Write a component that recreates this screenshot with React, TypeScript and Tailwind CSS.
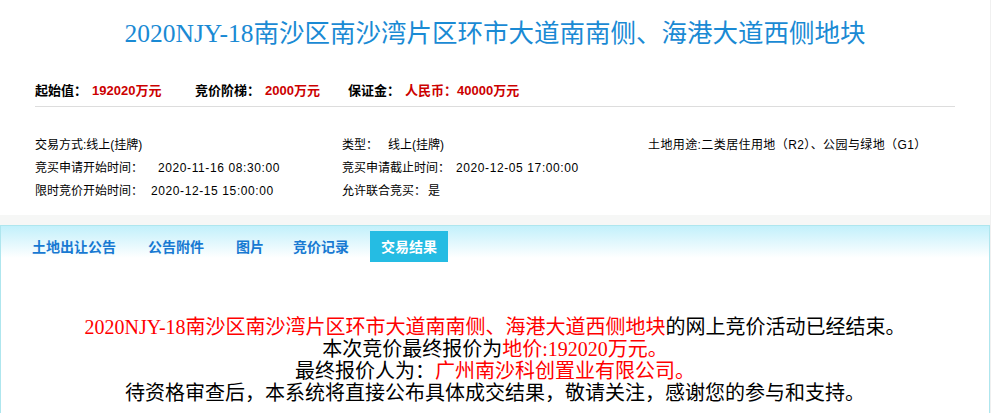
import React from 'react'

const cjk = "font-['Noto_Sans_CJK_SC',sans-serif]"
const sansMix = "font-['Liberation_Sans','Noto_Sans_CJK_SC',sans-serif]"
const serifMix = "font-['Liberation_Serif','Noto_Sans_CJK_SC',serif]"

const tabs = [
  { label: '土地出让公告', cls: 'ml-[20px] text-[#1779d2]' },
  { label: '公告附件', cls: 'ml-[10px] text-[#1779d2]' },
  { label: '图片', cls: 'ml-[10px] text-[#1779d2]' },
  { label: '竞价记录', cls: 'ml-[7px] text-[#1779d2]' },
  { label: '交易结果', cls: 'ml-[10px] bg-[#25bce3] text-white' },
]

const App = () => {
  return (
    <div className={`w-[991px] h-[413px] overflow-hidden bg-white ${cjk}`}>
      <div className="w-[991px] border-r border-[#f0f0f0]">
        {/* title */}
        <div className="h-[68px] flex items-center justify-center">
          <h1 className={`text-[25.5px] leading-[30px] font-normal text-[#1a8ad4] ${serifMix}`}>
            2020NJY-18南沙区南沙湾片区环市大道南南侧、海港大道西侧地块
          </h1>
        </div>

        {/* price row */}
        <div className={`mx-[35px] h-[39px] flex items-end pb-[7px] border-b border-[#dddddd] text-[13px] leading-[17px] font-bold ${sansMix}`}>
          <span className="w-[57px] text-black">起始值：</span>
          <span className="w-[103px] text-[#cc0000]">192020万元</span>
          <span className="w-[70px] text-black">竞价阶梯：</span>
          <span className="w-[83px] text-[#cc0000]">2000万元</span>
          <span className="w-[57px] text-black">保证金：</span>
          <span className="text-[#cc0000]">人民币：40000万元</span>
        </div>

        {/* info grid */}
        <div className={`pl-[35px] pt-[27px] pb-[12px] grid grid-cols-[307px_306px_1fr] text-[12px] leading-[23px] text-black ${sansMix}`}>
          <div>交易方式:线上(挂牌)</div>
          <div>类型：<span className="ml-[10px]">线上(挂牌)</span></div>
          <div className="tracking-[0.4px]">土地用途:二类居住用地（R2）、公园与绿地（G1）</div>
          <div>竞买申请开始时间：<span className="ml-[15px] tracking-[0.6px]">2020-11-16 08:30:00</span></div>
          <div>竞买申请截止时间：<span className="ml-[6px] tracking-[0.6px]">2020-12-05 17:00:00</span></div>
          <div></div>
          <div>限时竞价开始时间：<span className="ml-[8px] tracking-[0.6px]">2020-12-15 15:00:00</span></div>
          <div>允许联合竞买：<span className="ml-[2px]">是</span></div>
          <div></div>
        </div>

        <div className="h-[10px] bg-[#f6f7f6]"></div>

        {/* result panel */}
        <div className="h-[200px] border-t border-l border-r border-[#aee6ee] bg-[linear-gradient(to_bottom,#c2f0fb,#ffffff_32px)]">
          <div className="mt-[5px] h-[31px] flex">
            {tabs.map((t) => (
              <div key={t.label} className={`px-[11px] flex items-center text-[14px] font-bold ${t.cls}`}>
                {t.label}
              </div>
            ))}
          </div>

          <div className={`mt-[54px] text-center text-[20px] leading-[22px] text-black ${serifMix}`}>
            <p>
              <span className="text-[#ff0000]">2020NJY-18南沙区南沙湾片区环市大道南南侧、海港大道西侧地块</span>的网上竞价活动已经结束。
            </p>
            <p>
              本次竞价最终报价为<span className="text-[#ff0000]">地价:192020万元。</span>
            </p>
            <p>
              最终报价人为：<span className="text-[#ff0000]">广州南沙科创置业有限公司。</span>
            </p>
            <p>待资格审查后，本系统将直接公布具体成交结果，敬请关注，感谢您的参与和支持。</p>
          </div>
        </div>
      </div>
    </div>
  )
}

export default App
